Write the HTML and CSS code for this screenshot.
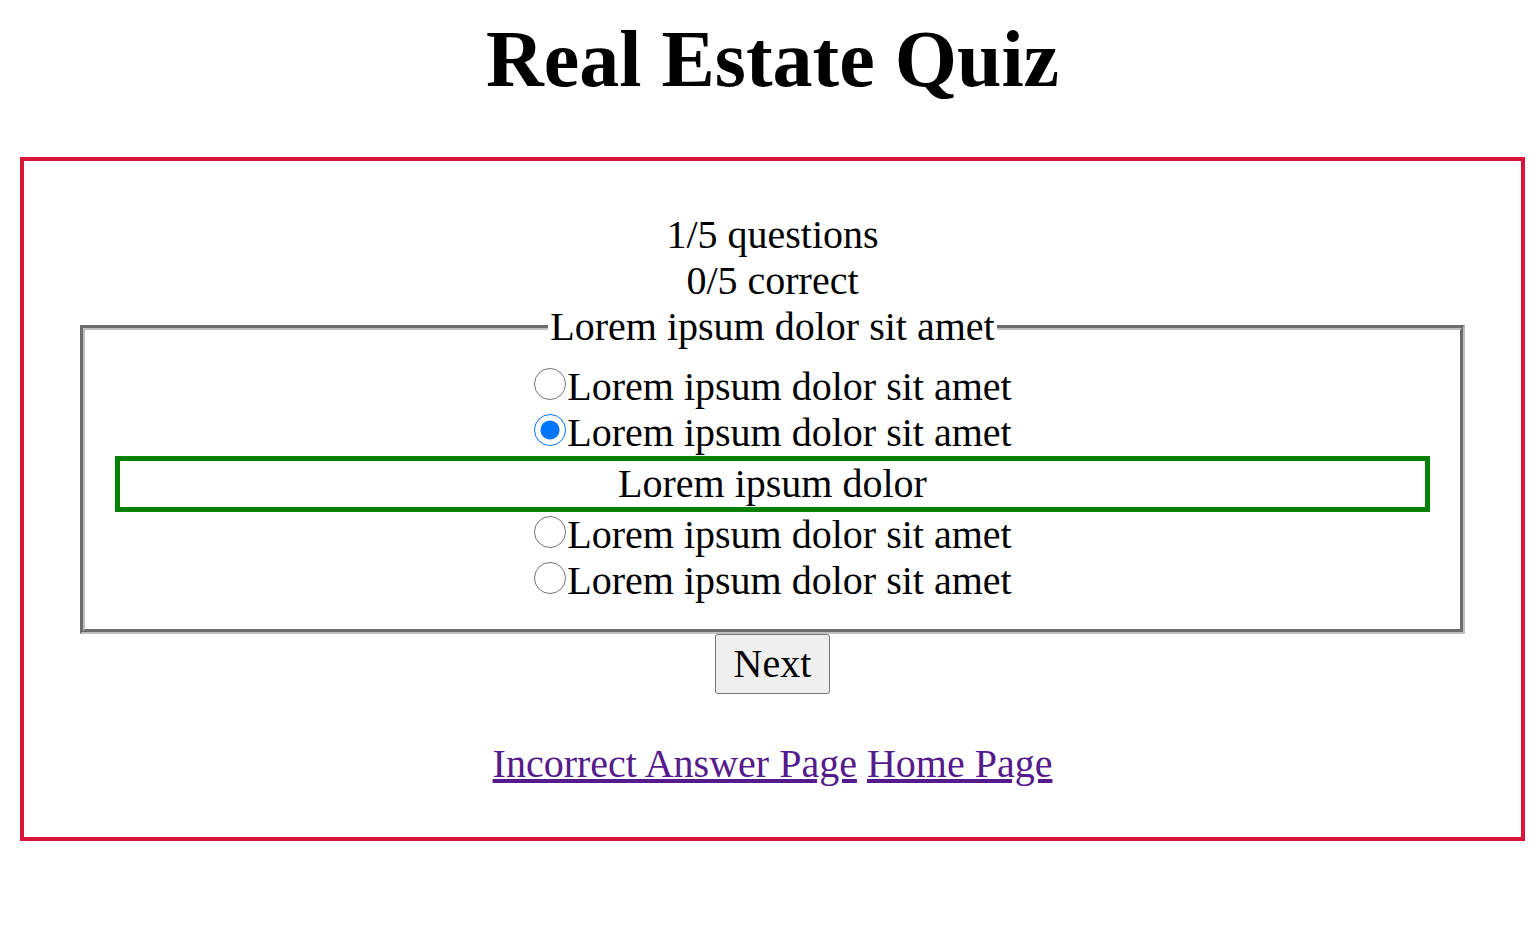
FILE: index.html
```html
<!DOCTYPE html>
<html lang="en">
<head>
<meta charset="utf-8">
<title>Real Estate Quiz</title>
<link rel="stylesheet" href="styles.css">
</head>
<body>
<h1 class="title">Real Estate Quiz</h1>
<main class="quiz">
  <div class="stat">1/5 questions</div>
  <div class="stat">0/5 correct</div>
  <fieldset class="question">
    <legend class="question-legend">Lorem ipsum dolor sit amet</legend>
    <div class="option"><input class="radio" type="radio" name="q1" id="o1"><label for="o1">Lorem ipsum dolor sit amet</label></div>
    <div class="option"><input class="radio" type="radio" name="q1" id="o2" checked><label for="o2">Lorem ipsum dolor sit amet</label></div>
    <div class="feedback">Lorem ipsum dolor</div>
    <div class="option"><input class="radio" type="radio" name="q1" id="o3"><label for="o3">Lorem ipsum dolor sit amet</label></div>
    <div class="option"><input class="radio" type="radio" name="q1" id="o4"><label for="o4">Lorem ipsum dolor sit amet</label></div>
  </fieldset>
  <div class="actions"><button class="next-btn" type="button">Next</button></div>
  <p class="links"><a class="link" href="#incorrect">Incorrect Answer Page</a> <a class="link" href="#home">Home Page</a></p>
</main>
</body>
</html>
```

FILE: styles.css
```css
html {
  background: #ffffff;
}

body {
  margin: 0;
  padding: 0 14px 0 20px;
  font-family: "Liberation Serif", "Times New Roman", serif;
  font-size: 40px;
  line-height: 46px;
  color: #000000;
}

.title {
  margin: 13px 0 52px;
  font-size: 80px;
  line-height: 92px;
  font-weight: bold;
  text-align: center;
}

.quiz {
  display: block;
  border: 4px solid #dc143c;
  padding: 51px 56px 50px;
  text-align: center;
}

.stat {
  text-align: center;
}

.question {
  margin: 0;
  padding: 14px 30px 25px;
  border: 5px groove rgb(192, 192, 192);
  text-align: center;
}

.question-legend {
  margin: 0 auto;
  padding: 0 2px;
}

.option {
  text-align: center;
}

.radio {
  width: 32px;
  height: 32px;
  margin: 0 1px;
  vertical-align: baseline;
}

.feedback {
  border: 5px solid #008000;
  text-align: center;
}

.actions {
  display: flex;
  justify-content: center;
}

.next-btn {
  font-family: "Liberation Serif", "Times New Roman", serif;
  font-size: 40px;
  line-height: 46px;
  color: #000000;
  padding: 6px 18px;
  border: 1px solid #767676;
  border-radius: 3px;
  background: #efefef;
}

.links {
  margin: 47px 0 0;
  text-align: center;
}

.link {
  color: #551a8b;
  text-decoration: underline;
}
```
